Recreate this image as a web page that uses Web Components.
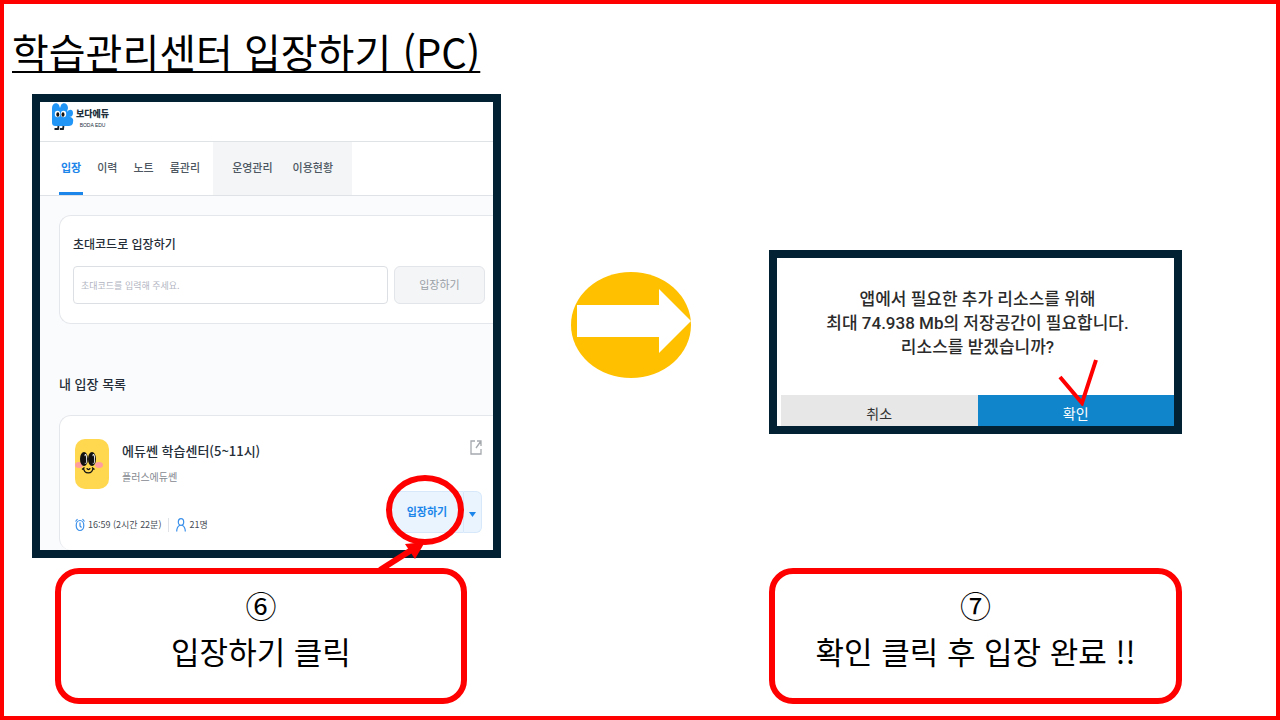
<!DOCTYPE html>
<html lang="ko">
<head>
<meta charset="UTF-8">
<meta name="viewport" content="width=device-width, initial-scale=1.0">
<title>학습관리센터 입장하기 (PC)</title>
<style>
    body {
        margin: 0;
        background: #fff;
        color: #000;
        font-family: "Noto Sans CJK KR", sans-serif;
    }
</style>
</head>
<body>
<guide-slide>
    <span slot="title">학습관리센터 입장하기 (PC)</span>
    <shot-frame slot="first">
        <boda-header></boda-header>
        <boda-tabs></boda-tabs>
        <boda-entry></boda-entry>
        <click-mark slot="mark"></click-mark>
    </shot-frame>
    <next-arrow slot="arrow"></next-arrow>
    <shot-frame slot="second">
        <resource-dialog></resource-dialog>
    </shot-frame>
    <step-callout slot="first-step" number="⑥">입장하기 클릭</step-callout>
    <step-callout slot="second-step" number="⑦">확인 클릭 후 입장 완료 !!</step-callout>
</guide-slide>

<script>
class GuideSlide extends HTMLElement {
    constructor() {
        super();
        this.attachShadow({ mode: 'open' });
        this.shadowRoot.innerHTML = `
            <style>
                :host {
                    display: flex;
                    flex-direction: column;
                    box-sizing: border-box;
                    min-height: 100vh;
                    border: 4px solid #f00;
                }
                h1 {
                    margin: 0;
                    padding: 17px 8px 13px;
                    font-size: 40px;
                    font-weight: 400;
                    line-height: 60px;
                    text-decoration: underline;
                    text-decoration-thickness: 2px;
                    text-underline-offset: 3px;
                    text-decoration-skip-ink: none;
                }
                .steps {
                    flex: 1;
                    display: grid;
                    grid-template-columns: 469fr 268fr 413fr;
                    grid-template-rows: 1fr auto;
                    row-gap: 10px;
                    align-items: center;
                    padding: 0 94px 12px 28px;
                }
                .first { align-self: stretch; display: grid; }
                .arrow { justify-self: center; }
                .second { padding-top: 32px; }
                .first-step { padding: 0 34px 0 23px; }
                .second-step { grid-column: 3; }
            </style>
            <h1><slot name="title"></slot></h1>
            <div class="steps">
                <div class="first"><slot name="first"></slot></div>
                <div class="arrow"><slot name="arrow"></slot></div>
                <div class="second"><slot name="second"></slot></div>
                <div class="first-step"><slot name="first-step"></slot></div>
                <div class="second-step"><slot name="second-step"></slot></div>
            </div>
        `;
    }
}

class ShotFrame extends HTMLElement {
    constructor() {
        super();
        this.attachShadow({ mode: 'open' });
        this.shadowRoot.innerHTML = `
            <style>
                :host {
                    display: flex;
                    position: relative;
                    border: 8px solid #022233;
                    background: #fff;
                }
                .screen {
                    flex: 1;
                    min-width: 0;
                    display: flex;
                    flex-direction: column;
                    overflow: hidden;
                }
            </style>
            <div class="screen"><slot></slot></div>
            <slot name="mark"></slot>
        `;
    }
}

class BodaHeader extends HTMLElement {
    constructor() {
        super();
        this.attachShadow({ mode: 'open' });
        this.shadowRoot.innerHTML = `
            <style>
                :host {
                    display: flex;
                    gap: 2px;
                    height: 40px;
                    padding-left: 11px;
                    border-bottom: 1px solid #e0e3e6;
                    box-sizing: border-box;
                    color: #22303c;
                }
                .brand {
                    display: flex;
                    flex-direction: column;
                    align-items: center;
                    padding-top: 5px;
                }
                .name { font-size: 9px; font-weight: 900; line-height: 14px; }
                .sub { font-family: "Liberation Sans", sans-serif; font-size: 5px; line-height: 8px; }
            </style>
            <svg width="23" height="30" viewBox="0 0 23 30" aria-hidden="true">
                <path fill="#2196f7" d="M1 6C1 1 6 0 8 3L9 6L10 3C12 0 17 1 17 6L16 10C18 7 22 7 22 11C22 14 20 15 18 15C21 15 23 17 22 20C22 23 20 24 17 24H5C2 24 1 23 1 20Z"/>
                <ellipse cx="6.5" cy="12" rx="2.700" ry="3.300" fill="#fff"/>
                <ellipse cx="12.500" cy="12" rx="2.700" ry="3.300" fill="#fff"/>
                <ellipse cx="6.800" cy="12.500" rx="1.500" ry="2.300" fill="#111"/>
                <ellipse cx="12" cy="12.500" rx="1.500" ry="2.300" fill="#111"/>
                <path d="M7.500 24L7 27H3.500M12.500 24L12 27H8.800" fill="none" stroke="#16202b" stroke-width="1.800"/>
            </svg>
            <div class="brand">
                <span class="name">보다에듀</span>
                <span class="sub">BODA EDU</span>
            </div>
        `;
    }
}

class BodaTabs extends HTMLElement {
    constructor() {
        super();
        this.attachShadow({ mode: 'open' });
        this.shadowRoot.innerHTML = `
            <style>
                :host { display: block; }
                nav {
                    display: flex;
                    padding-left: 19px;
                    border-bottom: 1px solid #dfe2e6;
                    font-size: 11px;
                    font-weight: 500;
                    line-height: 50px;
                }
                a {
                    color: #4d5761;
                    text-decoration: none;
                    border-bottom: 3px solid transparent;
                    padding: 0 2px;
                    white-space: nowrap;
                }
                .main { display: flex; gap: 12px; padding-right: 11px; }
                .admin { display: flex; gap: 16px; padding: 0 17px; background: #f3f5f7; }
                a.on { color: #1c86ea; border-color: #1c86ea; font-weight: 700; }
            </style>
            <nav>
                <div class="main">
                    <a class="on" href="#enter">입장</a>
                    <a href="#history">이력</a>
                    <a href="#note">노트</a>
                    <a href="#room">룸관리</a>
                </div>
                <div class="admin">
                    <a href="#operate">운영관리</a>
                    <a href="#usage">이용현황</a>
                </div>
            </nav>
        `;
    }
}

class BodaEntry extends HTMLElement {
    constructor() {
        super();
        this.attachShadow({ mode: 'open' });
        this.shadowRoot.innerHTML = `
            <style>
                :host {
                    flex: 1;
                    display: flex;
                    flex-direction: column;
                    padding: 19px 0 0 19px;
                    background: #fafbfd;
                    color: #252e38;
                }
                h2, h3, p { margin: 0; }
                button, input { font-family: inherit; box-sizing: border-box; margin: 0; }
                .card {
                    border: 1px solid #e4e7eb;
                    border-right: 0;
                    border-radius: 12px 0 0 12px;
                    background: #fff;
                }
                .code { padding: 18px 8px 19px 13px; }
                .code label { display: block; font-size: 12px; font-weight: 500; line-height: 20px; padding-bottom: 12px; }
                .row { display: flex; gap: 6px; }
                input {
                    flex: 1;
                    min-width: 0;
                    height: 38px;
                    padding: 0 7px;
                    border: 1px solid #dcdfe4;
                    border-radius: 4px;
                    font-size: 9px;
                }
                input::placeholder { color: #b3b6c2; }
                .row button {
                    width: 91px;
                    padding: 0 0 3px;
                    border: 1px solid #e2e5e9;
                    border-radius: 6px;
                    background: #f3f5f7;
                    color: #9a9fa6;
                    font-size: 11px;
                }
                h2 { padding: 48px 0 19px; font-size: 13px; font-weight: 500; line-height: 24px; }
                .room { flex: 1; border-bottom: 0; padding: 23px 11px 13px 15px; display: flex; flex-direction: column; }
                .top { display: flex; gap: 13px; }
                .name { flex: 1; }
                h3 { font-size: 13px; font-weight: 500; line-height: 24px; }
                .name p { color: #858a91; font-size: 10px; line-height: 28px; }
                .bottom { display: flex; justify-content: space-between; align-items: flex-start; }
                .meta { display: flex; align-items: center; font-size: 9px; color: #454c54; padding-top: 26px; line-height: 16px; }
                .meta svg { margin-right: 3px; }
                .line { height: 14px; border-left: 1px solid #dfe2e6; margin: 0 7px; }
                .split { display: flex; height: 42px; }
                .split button {
                    border: 1px solid #d7e8fa;
                    background: #eaf4fe;
                    color: #1c86ea;
                    font-size: 11px;
                    font-weight: 700;
                    padding: 0 0 3px;
                }
                .enter { width: 74px; border-radius: 6px 0 0 6px; }
                .split .more { width: 18px; border-left: 0; border-radius: 0 6px 6px 0; padding: 0; }
            </style>
            <form class="card code">
                <label for="code">초대코드로 입장하기</label>
                <div class="row">
                    <input id="code" type="text" placeholder="초대코드를 입력해 주세요.">
                    <button type="button">입장하기</button>
                </div>
            </form>
            <h2>내 입장 목록</h2>
            <section class="card room">
                <div class="top">
                    <svg width="34" height="50" viewBox="0 0 34 50" aria-hidden="true">
                        <rect width="34" height="50" rx="10" fill="#ffd84f"/>
                        <ellipse cx="4" cy="26" rx="4" ry="3" fill="#ff9d9f"/>
                        <ellipse cx="24" cy="26" rx="4" ry="3" fill="#ff9d9f"/>
                        <ellipse cx="9" cy="20" rx="4" ry="7" fill="#111"/>
                        <ellipse cx="17" cy="20" rx="4" ry="7" fill="#111"/>
                        <ellipse cx="10.500" cy="20" rx="1.500" ry="5" fill="#fff"/>
                        <ellipse cx="18.500" cy="20" rx="1.500" ry="5" fill="#fff"/>
                        <ellipse cx="10" cy="20.500" rx="1.200" ry="4.200" fill="#111"/>
                        <ellipse cx="18" cy="20.500" rx="1.200" ry="4.200" fill="#111"/>
                        <path d="M8.500 29C9 35.500 17.500 35.500 18 29M7 30.500L9.500 28.500M17 28.500L19.500 30.500M12 29C12 31 15 31 15 29" fill="none" stroke="#111" stroke-width="1.300"/>
                    </svg>
                    <div class="name">
                        <h3>에듀쎈 학습센터(5~11시)</h3>
                        <p>플러스에듀쎈</p>
                    </div>
                    <svg width="12" height="17" viewBox="0 0 12 17" fill="none" stroke="#a5a9ae" stroke-width="1.300" aria-hidden="true">
                        <path d="M5 2H1V15H11V10M7 2H11V7M11 2L6 9"/>
                    </svg>
                </div>
                <div class="bottom">
                    <div class="meta">
                        <svg width="10" height="14" viewBox="0 0 10 14" fill="none" stroke="#3b90ea" stroke-width="1.200" aria-hidden="true">
                            <ellipse cx="5" cy="7.500" rx="3.800" ry="5"/>
                            <path d="M5 4.500V8L6.500 9.500M.5 3.500L2.500 1M9.500 3.500L7.500 1"/>
                        </svg>
                        <span>16:59 (2시간 22분)</span>
                        <span class="line"></span>
                        <svg width="10" height="14" viewBox="0 0 10 14" fill="none" stroke="#3b90ea" stroke-width="1.200" aria-hidden="true">
                            <ellipse cx="5" cy="4" rx="2.700" ry="3.400"/>
                            <path d="M.7 13.500C.7 10 2.500 8 4 7.300M9.300 13.500C9.300 10 7.500 8 6 7.300"/>
                        </svg>
                        <span>21명</span>
                    </div>
                    <div class="split">
                        <button class="enter" type="button">입장하기</button>
                        <button class="more" type="button" aria-label="더보기">
                            <svg width="7" height="5" viewBox="0 0 7 5" aria-hidden="true"><path d="M0 0H7L3.500 5Z" fill="#1c86ea"/></svg>
                        </button>
                    </div>
                </div>
            </section>
        `;
    }
}

// red ring round the enter button, with the arrow that comes from the callout
class ClickMark extends HTMLElement {
    constructor() {
        super();
        this.attachShadow({ mode: 'open' });
        this.shadowRoot.innerHTML = `
            <style>
                :host { position: absolute; right: 23px; bottom: -24px; z-index: 1; pointer-events: none; }
                svg { display: block; }
            </style>
            <svg width="94" height="102" viewBox="0 0 94 102" aria-hidden="true">
                <ellipse cx="49" cy="38" rx="36" ry="32" fill="none" stroke="#f00" stroke-width="6"/>
                <path d="M4 98L37 77" stroke="#f00" stroke-width="6"/>
                <path d="M49 70L29 72L39 87Z" fill="#f00"/>
            </svg>
        `;
    }
}

class NextArrow extends HTMLElement {
    constructor() {
        super();
        this.attachShadow({ mode: 'open' });
        this.shadowRoot.innerHTML = `
            <style>
                :host { display: block; padding: 0 8px 2px 0; }
                svg { display: block; }
            </style>
            <svg width="120" height="106" viewBox="0 0 120 106" aria-hidden="true">
                <ellipse cx="60" cy="53" rx="60" ry="53" fill="#ffc000"/>
                <path d="M6 33H88V17L120 49L88 81V65H6Z" fill="#fff"/>
            </svg>
        `;
    }
}

class ResourceDialog extends HTMLElement {
    constructor() {
        super();
        this.attachShadow({ mode: 'open' });
        this.shadowRoot.innerHTML = `
            <style>
                :host {
                    display: block;
                    position: relative;
                    flex: 1;
                    padding: 29px 0 0 4px;
                    font-family: Roboto, "Noto Sans CJK KR", sans-serif;
                }
                p {
                    margin: 0 0 36px;
                    color: #2b2b2b;
                    font-size: 17px;
                    font-weight: 500;
                    line-height: 24px;
                    text-align: center;
                }
                .actions { display: flex; }
                button {
                    flex: 1;
                    height: 31px;
                    margin: 0;
                    padding: 4px 0 0;
                    border: 0;
                    background: #e7e7e7;
                    color: #333;
                    font-family: inherit;
                    font-size: 14px;
                }
                .ok { background: #1085cb; color: #fff; }
                .check { position: absolute; right: 76px; bottom: 20px; pointer-events: none; }
            </style>
            <p>앱에서 필요한 추가 리소스를 위해<br>최대 74.938 Mb의 저장공간이 필요합니다.<br>리소스를 받겠습니까?</p>
            <div class="actions">
                <button type="button">취소</button>
                <button class="ok" type="button">확인</button>
            </div>
            <svg class="check" width="40" height="48" viewBox="0 0 40 48" aria-hidden="true">
                <path d="M2 19L24 45L38 2" fill="none" stroke="#f00" stroke-width="4"/>
            </svg>
        `;
    }
}

class StepCallout extends HTMLElement {
    constructor() {
        super();
        this.attachShadow({ mode: 'open' });
    }

    connectedCallback() {
        const number = this.getAttribute('number') || '';

        this.shadowRoot.innerHTML = `
            <style>
                :host {
                    display: block;
                    padding: 8px 16px 24px;
                    border: 6px solid #f00;
                    border-radius: 24px;
                    background: #fff;
                    font-size: 31px;
                    line-height: 46px;
                    text-align: center;
                }
            </style>
            <div>${number}</div>
            <div><slot></slot></div>
        `;
    }
}

customElements.define('guide-slide', GuideSlide);
customElements.define('shot-frame', ShotFrame);
customElements.define('boda-header', BodaHeader);
customElements.define('boda-tabs', BodaTabs);
customElements.define('boda-entry', BodaEntry);
customElements.define('click-mark', ClickMark);
customElements.define('next-arrow', NextArrow);
customElements.define('resource-dialog', ResourceDialog);
customElements.define('step-callout', StepCallout);
</script>
</body>
</html>
